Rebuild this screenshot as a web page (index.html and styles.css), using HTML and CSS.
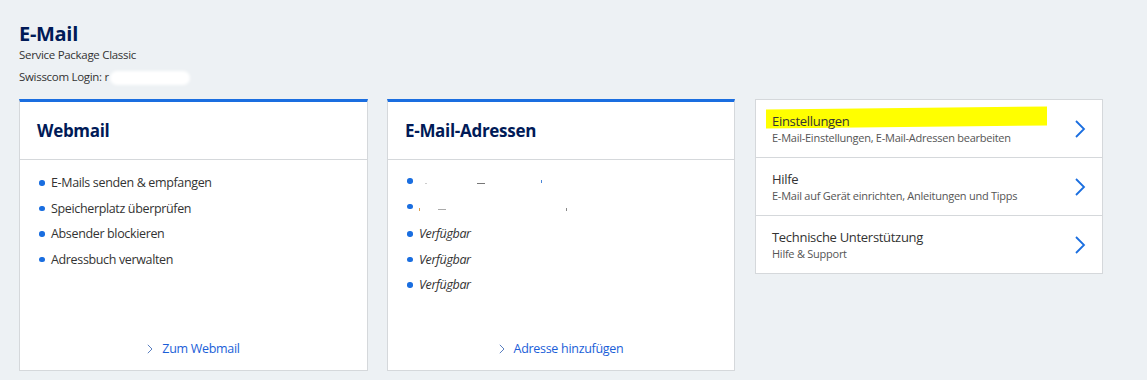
FILE: index.html
```html
<!DOCTYPE html>
<html lang="de">
<head>
    <meta charset="UTF-8">
    <meta name="viewport" content="width=device-width, initial-scale=1.0">
    <title>E-Mail</title>
    <link rel="stylesheet" href="styles.css">
</head>
<body>
    <header class="page-head">
        <h1>E-Mail</h1>
        <p class="package">Service Package Classic</p>
        <p class="login">Swisscom Login: r<span class="blur"></span></p>
    </header>

    <section class="grid">
        <div class="card">
            <h2 class="card-title">Webmail</h2>
            <div class="card-body">
                <ul class="dots">
                    <li>E-Mails senden &amp; empfangen</li>
                    <li>Speicherplatz überprüfen</li>
                    <li>Absender blockieren</li>
                    <li>Adressbuch verwalten</li>
                </ul>
                <a href="#" class="more"><svg class="arr" width="6" height="10" viewBox="0 0 6 10"><path d="M0.8 0.8 L5 5 L0.8 9.2" fill="none" stroke="#5a7fc0" stroke-width="1"/></svg>Zum Webmail</a>
            </div>
        </div>

        <div class="card">
            <h2 class="card-title">E-Mail-Adressen</h2>
            <div class="card-body">
                <ul class="dots">
                    <li class="hidden-addr"><span class="crumb c1"></span><span class="crumb c2"></span><span class="tick t1"></span></li>
                    <li class="hidden-addr"><span class="tick t2"></span><span class="crumb c3"></span><span class="tick t3"></span></li>
                    <li class="free">Verfügbar</li>
                    <li class="free">Verfügbar</li>
                    <li class="free">Verfügbar</li>
                </ul>
                <a href="#" class="more"><svg class="arr" width="6" height="10" viewBox="0 0 6 10"><path d="M0.8 0.8 L5 5 L0.8 9.2" fill="none" stroke="#5a7fc0" stroke-width="1"/></svg>Adresse hinzufügen</a>
            </div>
        </div>

        <div class="links">
            <a href="#" class="link-row">
                <div>
                    <div class="row-title"><span class="marker"></span><span class="txt">Einstellungen</span></div>
                    <div class="row-sub">E-Mail-Einstellungen, E-Mail-Adressen bearbeiten</div>
                </div>
                <svg class="chev" width="12" height="20" viewBox="0 0 12 20"><path d="M2 2 L10 10 L2 18" fill="none" stroke="#1a6ee0" stroke-width="1.8"/></svg>
            </a>
            <a href="#" class="link-row">
                <div>
                    <div class="row-title">Hilfe</div>
                    <div class="row-sub">E-Mail auf Gerät einrichten, Anleitungen und Tipps</div>
                </div>
                <svg class="chev" width="12" height="20" viewBox="0 0 12 20"><path d="M2 2 L10 10 L2 18" fill="none" stroke="#1a6ee0" stroke-width="1.8"/></svg>
            </a>
            <a href="#" class="link-row">
                <div>
                    <div class="row-title">Technische Unterstützung</div>
                    <div class="row-sub">Hilfe &amp; Support</div>
                </div>
                <svg class="chev" width="12" height="20" viewBox="0 0 12 20"><path d="M2 2 L10 10 L2 18" fill="none" stroke="#1a6ee0" stroke-width="1.8"/></svg>
            </a>
        </div>
    </section>
</body>
</html>
```

FILE: styles.css
```css
body {
    margin: 0;
    background-color: #edf1f4;
    font-family: 'Open Sans', 'Noto Sans', sans-serif;
    color: #333;
}
.page-head {
    padding: 21px 19px 0;
}
h1 {
    margin: 0;
    font-size: 20px;
    line-height: 26px;
    font-weight: 700;
    color: #001a57;
    letter-spacing: -0.3px;
}
.package, .login {
    margin: 0;
    font-size: 11.5px;
    line-height: 16px;
    letter-spacing: -0.3px;
}
.login {
    margin-top: 6px;
}
.blur {
    display: inline-block;
    width: 80px;
    height: 14px;
    margin-left: 1px;
    vertical-align: -4px;
    background-color: #fff;
    border-radius: 8px;
    filter: blur(1.5px);
}
.grid {
    display: grid;
    grid-template-columns: 349px 348px 349px;
    column-gap: 19px;
    padding: 14px 0 0 19px;
    align-items: start;
}
.grid .links {
    margin-left: 1px;
}
.card {
    background-color: #fff;
    border: 1px solid #d5d8db;
    border-top: 3px solid #1a6ee0;
    height: 268px;
    display: flex;
    flex-direction: column;
}
.card-title {
    margin: 0;
    padding: 0 17px;
    height: 57px;
    line-height: 57px;
    font-size: 17px;
    font-weight: 700;
    color: #001a57;
    letter-spacing: -0.3px;
    border-bottom: 1px solid #d5d8db;
}
.card-body {
    flex: 1;
    display: flex;
    flex-direction: column;
    justify-content: space-between;
    padding: 10px 17px 13px;
}
.dots {
    list-style: none;
    margin: 0;
    padding: 0;
}
.dots li {
    position: relative;
    padding-left: 14px;
    height: 25.5px;
    line-height: 25px;
    font-size: 12.5px;
    letter-spacing: -0.35px;
}
.dots li:before {
    content: '';
    position: absolute;
    left: 2px;
    top: 10px;
    width: 5.5px;
    height: 5.5px;
    border-radius: 50%;
    background-color: #1a6ee0;
}
.dots li.hidden-addr:before {
    top: 8px;
}
.free {
    font-style: italic;
}
.crumb {
    display: inline-block;
    height: 1px;
    background-color: #777;
    vertical-align: middle;
}
.tick {
    display: inline-block;
    width: 1px;
    height: 3px;
    background-color: #4a86d8;
    vertical-align: middle;
}
.c1 { width: 2px; margin-left: 6px; background-color: #ccc; }
.c2 { width: 8px; margin-left: 50px; }
.t1 { margin-left: 56px; vertical-align: 4px; }
.t2 { margin-left: 0; background-color: #e0a050; }
.c3 { width: 8px; margin-left: 18px; background-color: #aaa; }
.t3 { margin-left: 120px; margin-right: 3px; background-color: #888; }
.more {
    align-self: center;
    font-size: 12.5px;
    letter-spacing: -0.3px;
    color: #1a5ed8;
    text-decoration: none;
}
.arr {
    margin-right: 9px;
    vertical-align: -1px;
}
.links {
    background-color: #fff;
    border: 1px solid #d5d8db;
}
.link-row {
    display: flex;
    align-items: center;
    justify-content: space-between;
    height: 57px;
    padding: 0 16px 0 16px;
    text-decoration: none;
    color: #333;
    border-bottom: 1px solid #d5d8db;
}
.link-row:last-child {
    border-bottom: none;
}
.row-title {
    position: relative;
    font-size: 13px;
    line-height: 18px;
    letter-spacing: -0.3px;
}
.row-title .txt {
    position: relative;
}
.marker {
    position: absolute;
    left: -6px;
    top: -4px;
    width: 281px;
    height: 19px;
    background-color: #ffff00;
    transform: skewY(-0.6deg);
}
.row-sub {
    font-size: 11px;
    line-height: 16px;
    color: #555;
    letter-spacing: -0.25px;
}
```
